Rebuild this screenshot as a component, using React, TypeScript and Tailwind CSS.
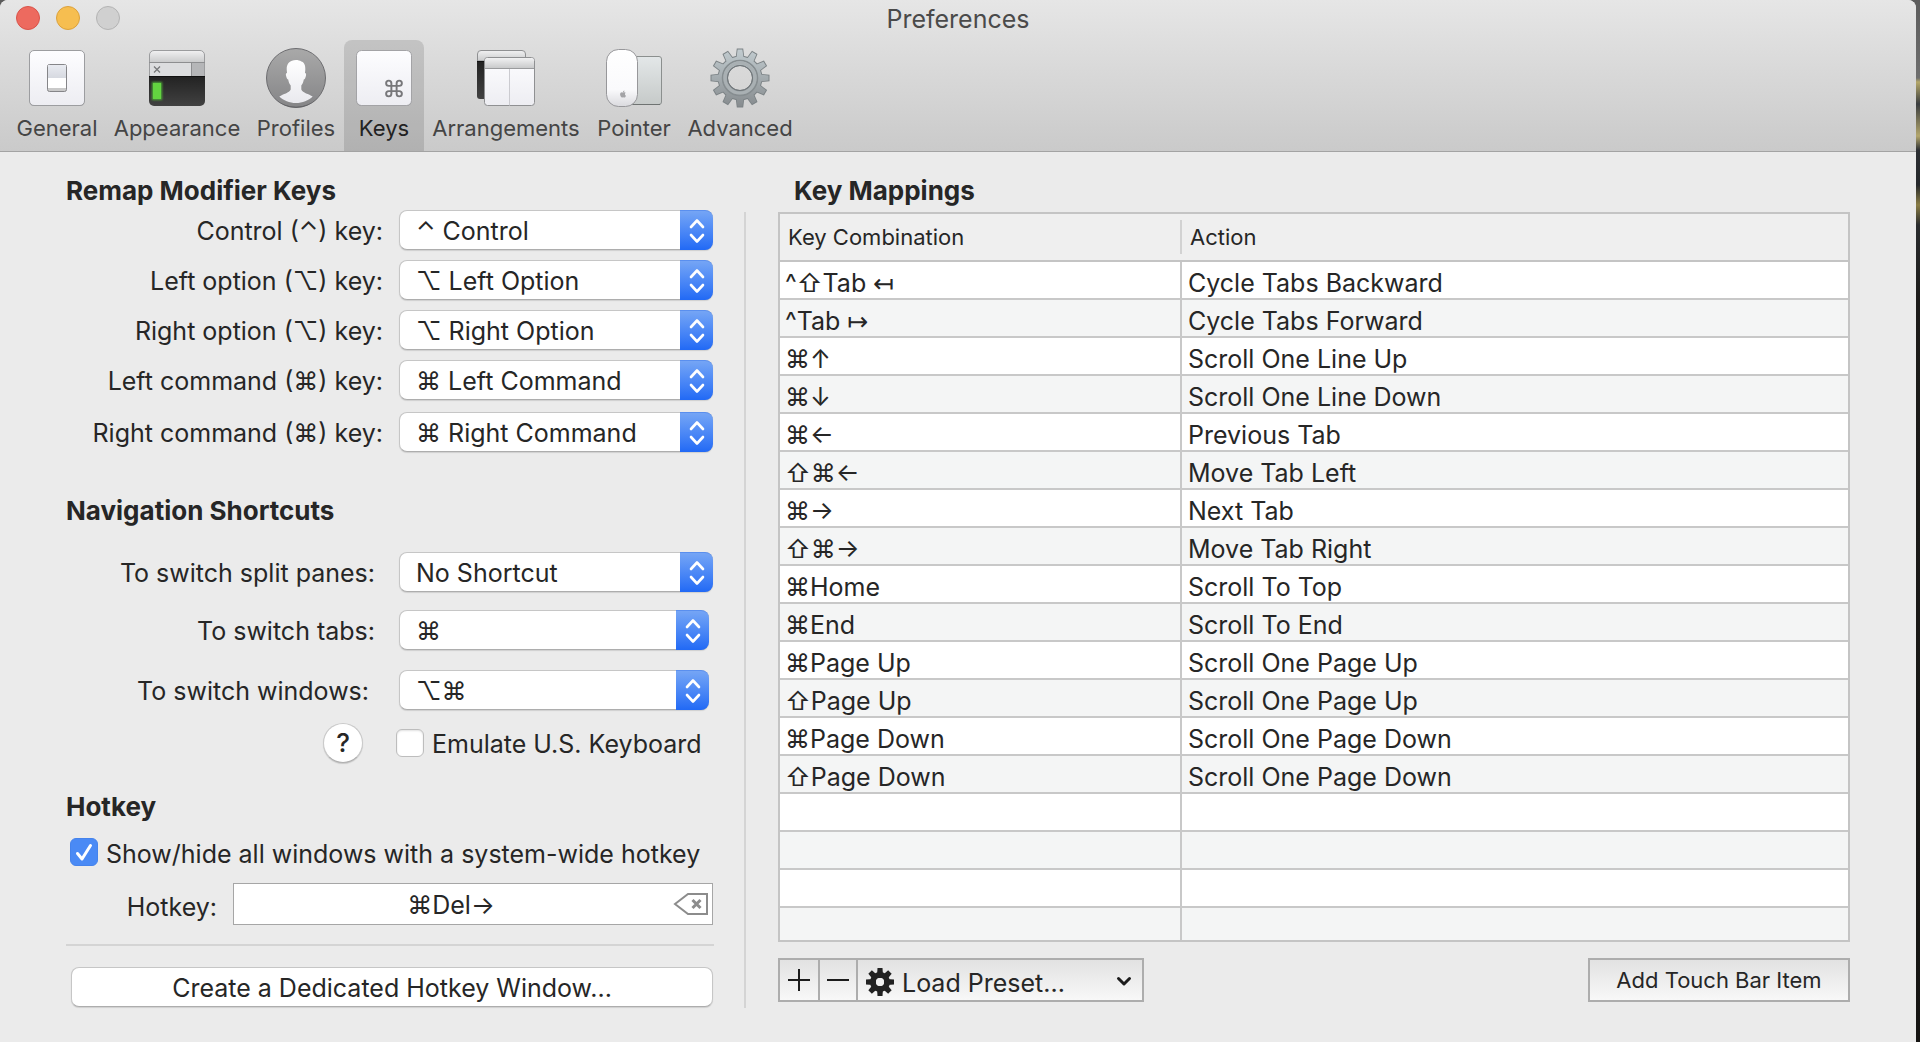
import { useState, type ReactNode } from "react";
import { Command } from "lucide-react";
import { FaApple } from "react-icons/fa";

const TWELVE_TEETH = [0, 30, 60, 90, 120, 150, 180, 210, 240, 270, 300, 330];
const EIGHT_TEETH = [0, 45, 90, 135, 180, 225, 270, 315];

function GeneralIcon() {
  return (
    <svg width="60" height="60" viewBox="0 0 60 60" aria-hidden="true">
      <defs>
        <linearGradient id="plate" x1="0" y1="0" x2="0" y2="1">
          <stop offset="0" stopColor="#fdfdff" />
          <stop offset="1" stopColor="#ededf2" />
        </linearGradient>
        <linearGradient id="rocker" x1="0" y1="0" x2="0" y2="1">
          <stop offset="0" stopColor="#e9ebf1" />
          <stop offset="1" stopColor="#d6d9e0" />
        </linearGradient>
      </defs>
      <rect x="2.5" y="3" width="55" height="55" rx="4.5" fill="#8f8f92" />
      <rect x="2.5" y="2.5" width="55" height="55" rx="4.5" fill="url(#plate)" stroke="#9c9da0" />
      <rect x="20.5" y="16.5" width="19" height="27" rx="2" fill="#c9c9c9" stroke="#858588" />
      <rect x="21" y="17" width="18" height="13" fill="url(#rocker)" />
      <rect x="21" y="30" width="18" height="10" fill="#fff" />
    </svg>
  );
}

function AppearanceIcon() {
  return (
    <svg width="60" height="60" viewBox="0 0 60 60" aria-hidden="true">
      <defs>
        <linearGradient id="bar" x1="0" y1="0" x2="0" y2="1">
          <stop offset="0" stopColor="#f1f1f2" />
          <stop offset="1" stopColor="#c9cacb" />
        </linearGradient>
        <linearGradient id="screen" x1="0" y1="0" x2="0" y2="1">
          <stop offset="0" stopColor="#222" />
          <stop offset="1" stopColor="#414141" />
        </linearGradient>
        <filter id="glow" x="-50%" y="-50%" width="200%" height="200%">
          <feGaussianBlur stdDeviation="1.2" />
        </filter>
      </defs>
      <path d="M2 28h56v25a5 5 0 0 1-5 5H7a5 5 0 0 1-5-5z" fill="url(#screen)" />
      <path d="M2.500 14.500V7a4.500 4.500 0 0 1 4.500-4.500h46a4.500 4.500 0 0 1 4.500 4.500v7.500z" fill="url(#bar)" stroke="#9b9c9e" />
      <rect x="2" y="14" width="42" height="14" fill="#dcdddf" />
      <rect x="44" y="14" width="14" height="14" fill="#b5b6b8" />
      <path d="M2 14.500h56M44.500 14v14" stroke="#8d8e90" />
      <path d="M2.500 15v13M57.500 15v13" stroke="#9b9c9e" />
      <path d="M2 28.500h56" stroke="#111" />
      <path d="M7 18.500l6 6M13 18.500l-6 6" stroke="#77787a" strokeWidth="1.300" />
      <rect x="5" y="34" width="10" height="18" fill="#4fae38" filter="url(#glow)" />
      <rect x="6" y="35" width="8" height="16" fill="#63d440" />
    </svg>
  );
}

function ProfilesIcon() {
  return (
    <svg width="60" height="60" viewBox="0 0 60 60" aria-hidden="true">
      <defs>
        <linearGradient id="disc" x1="0" y1="0" x2="0" y2="1">
          <stop offset="0" stopColor="#a9a9a9" />
          <stop offset="1" stopColor="#858587" />
        </linearGradient>
        <linearGradient id="bust" x1="0" y1="0" x2="0" y2="1">
          <stop offset="0" stopColor="#fff" />
          <stop offset="1" stopColor="#e9e9ee" />
        </linearGradient>
      </defs>
      <circle cx="30" cy="30" r="29.500" fill="url(#disc)" stroke="#6d6d70" />
      <path d="M8 50a30 30 0 0 0 44 0 32 32 0 0 1-44 0z" fill="#5f5f62" />
      <path
        d="M30 12c-6 0-9.500 3.500-9.300 9.500l.3 3.500c-1.200 0-1.300 1.500-.9 3 .4 2 1.200 3.300 2.100 3.500.4 2.600 1.300 4.500 2.500 6v4c-1.500 3.500-7.500 4.500-11.400 7C17.500 52.500 23.500 55 30 55s12.500-2.500 16.700-6.500c-3.900-2.500-9.900-3.500-11.400-7v-4c1.200-1.500 2.100-3.400 2.500-6 .9-.2 1.700-1.500 2.100-3.500.4-1.500.3-3-.9-3l.3-3.500c.2-5-1.500-7.300-4-8C34 12.500 32 12 30 12z"
        fill="url(#bust)"
      />
    </svg>
  );
}

function KeysIcon() {
  return (
    <svg width="60" height="60" viewBox="0 0 60 60" aria-hidden="true">
      <rect x="2.500" y="3" width="55" height="55" rx="5" fill="#8a8a8d" />
      <rect x="2.500" y="2.500" width="55" height="55" rx="5" fill="url(#plate)" stroke="#a3a3a6" />
      <Command x={29.500} y={30} width={21} height={21} stroke="#77777a" strokeWidth={2.200} />
    </svg>
  );
}

function ArrangementsIcon() {
  return (
    <svg width="60" height="60" viewBox="0 0 60 60" aria-hidden="true">
      <path d="M1 13h20v38H4a3 3 0 0 1-3-3z" fill="url(#screen)" />
      <path d="M1.500 13V6A3.500 3.500 0 0 1 5 2.500h41A3.500 3.500 0 0 1 49.500 6v7z" fill="url(#bar)" stroke="#8f9092" />
      <path d="M1 13.500h10" stroke="#111" />
      <rect x="8.500" y="9.500" width="50" height="48" rx="3" fill="url(#plate)" stroke="#8f9092" />
      <path d="M9 20V13a3 3 0 0 1 3-3h43a3 3 0 0 1 3 3v7z" fill="url(#bar)" />
      <path d="M9 20.500h49" stroke="#9a9b9d" />
      <path d="M33.500 21v36.500" stroke="#cbcbd0" />
    </svg>
  );
}

function PointerIcon() {
  return (
    <svg width="60" height="60" viewBox="0 0 60 60" aria-hidden="true">
      <defs>
        <linearGradient id="pad" x1="0" y1="0" x2="0" y2="1">
          <stop offset="0" stopColor="#e3e7e8" />
          <stop offset="1" stopColor="#c6cac9" />
        </linearGradient>
        <linearGradient id="mouse" x1="0" y1="0" x2="0" y2="1">
          <stop offset="0" stopColor="#fff" />
          <stop offset="0.700" stopColor="#fafafc" />
          <stop offset="1" stopColor="#dadade" />
        </linearGradient>
      </defs>
      <rect x="24.500" y="8.500" width="33" height="48" rx="2.500" fill="url(#pad)" stroke="#8b8f8e" />
      <path d="M27 56.500h29" stroke="#6f7372" />
      <rect x="2.500" y="1.500" width="31" height="57" rx="12" fill="url(#mouse)" stroke="#97979a" />
      <FaApple x={15} y={42} size={8} color="#a3a3a6" />
    </svg>
  );
}

function AdvancedIcon() {
  return (
    <svg width="60" height="60" viewBox="0 0 60 60" aria-hidden="true">
      <defs>
        <linearGradient id="steel" gradientUnits="userSpaceOnUse" x1="0" y1="0" x2="0" y2="60">
          <stop offset="0" stopColor="#c3cdd1" />
          <stop offset="1" stopColor="#858a8d" />
        </linearGradient>
        <mask id="teeth">
          {TWELVE_TEETH.map((a) => (
            <path key={a} d="M26.800 0.500h6.400l1.300 11h-9z" fill="#fff" transform={`rotate(${a} 30 30)`} />
          ))}
          <circle cx="30" cy="30" r="22.500" fill="#fff" />
          <circle cx="30" cy="30" r="12" fill="#000" />
        </mask>
        <mask id="teethInner">
          {TWELVE_TEETH.map((a) => (
            <path key={a} d="M27.600 1.500h4.800l1.300 10h-7.400z" fill="#fff" transform={`rotate(${a} 30 30)`} />
          ))}
          <circle cx="30" cy="30" r="21.500" fill="#fff" />
          <circle cx="30" cy="30" r="13" fill="#000" />
        </mask>
      </defs>
      <rect width="60" height="60" fill="#7b8285" mask="url(#teeth)" />
      <rect width="60" height="60" fill="url(#steel)" mask="url(#teethInner)" />
      <circle cx="30" cy="30" r="17.500" fill="none" stroke="#868d90" strokeWidth="1.500" />
      <circle cx="30" cy="30" r="15" fill="none" stroke="#a9b0b3" strokeWidth="3" />
      <circle cx="30" cy="30" r="12.500" fill="none" stroke="#70767a" />
    </svg>
  );
}

function SmallGear() {
  return (
    <svg width="28" height="28" viewBox="0 0 28 28" aria-hidden="true">
      <g fill="#222">
        {EIGHT_TEETH.map((a) => (
          <path key={a} d="M11.500 0h5l.5 7h-6z" transform={`rotate(${a} 14 14)`} />
        ))}
      </g>
      <circle cx="14" cy="14" r="7" fill="none" stroke="#222" strokeWidth="6" />
      <circle cx="14" cy="14" r="4" fill="#f0f0f0" />
    </svg>
  );
}

type Tab = { name: string; width: string; icon: ReactNode };

const TABS: Tab[] = [
  { name: "General", width: "w-[98px]", icon: <GeneralIcon /> },
  { name: "Appearance", width: "w-[142px]", icon: <AppearanceIcon /> },
  { name: "Profiles", width: "w-[96px]", icon: <ProfilesIcon /> },
  { name: "Keys", width: "w-[80px]", icon: <KeysIcon /> },
  { name: "Arrangements", width: "w-[164px]", icon: <ArrangementsIcon /> },
  { name: "Pointer", width: "w-[92px]", icon: <PointerIcon /> },
  { name: "Advanced", width: "w-[120px]", icon: <AdvancedIcon /> },
];

const MODIFIERS = ["⌃ Control", "⌥ Left Option", "⌥ Right Option", "⌘ Left Command", "⌘ Right Command"];

const MAPPINGS: [string, string][] = [
  ["^⇧Tab ↤", "Cycle Tabs Backward"],
  ["^Tab ↦", "Cycle Tabs Forward"],
  ["⌘↑", "Scroll One Line Up"],
  ["⌘↓", "Scroll One Line Down"],
  ["⌘←", "Previous Tab"],
  ["⇧⌘←", "Move Tab Left"],
  ["⌘→", "Next Tab"],
  ["⇧⌘→", "Move Tab Right"],
  ["⌘Home", "Scroll To Top"],
  ["⌘End", "Scroll To End"],
  ["⌘Page Up", "Scroll One Page Up"],
  ["⇧Page Up", "Scroll One Page Up"],
  ["⌘Page Down", "Scroll One Page Down"],
  ["⇧Page Down", "Scroll One Page Down"],
  ["", ""],
  ["", ""],
  ["", ""],
  ["", ""],
];

type PopupProps = { id: string; label: string; value: string; options: string[]; row: string; labelPad: string; width: string };

function PopupRow({ id, label, value, options, row, labelPad, width }: PopupProps) {
  return (
    <div className={`flex items-center ${row}`}>
      <label htmlFor={id} className={`w-[333px] shrink-0 pt-[2px] text-right whitespace-nowrap ${labelPad}`}>
        {label}
      </label>
      <div className={`relative ${width}`}>
        <select
          id={id}
          defaultValue={value}
          className="block h-10 w-full appearance-none rounded-lg border border-[#c6c6c6] border-b-[#adadad] bg-white pt-[2px] pr-9 pl-4 shadow-[0_1px_1px_rgba(0,0,0,0.12)]"
        >
          {options.map((o) => (
            <option key={o}>{o}</option>
          ))}
        </select>
        <span className="pointer-events-none absolute inset-y-0 right-0 flex w-[33px] items-center justify-center rounded-r-lg border-t border-[#5a8fee] bg-linear-to-b from-[#75a5f5] to-[#2169f5]">
          <svg width="18" height="26" viewBox="0 0 18 26" fill="none" stroke="#fff" strokeWidth="2.600" strokeLinecap="round" strokeLinejoin="round" aria-hidden="true">
            <path d="M3 9l6-6.500L15 9M3 17l6 6.500 6-6.500" />
          </svg>
        </span>
      </div>
    </div>
  );
}

function LeftColumn() {
  const [emulate, setEmulate] = useState(false);
  const [hotkeyOn, setHotkeyOn] = useState(true);
  const [hotkey, setHotkey] = useState("⌘Del→");
  return (
    <div className="w-[648px] shrink-0">
      <section>
        <h2 className="text-[26px] leading-8 font-bold">Remap Modifier Keys</h2>
        <div className="flex flex-col gap-[10px] pt-[3px]">
          <PopupRow id="control" label="Control (⌃) key:" value={MODIFIERS[0]} options={MODIFIERS} row="" labelPad="pr-4" width="w-[314px]" />
          <PopupRow id="left-option" label="Left option (⌥) key:" value={MODIFIERS[1]} options={MODIFIERS} row="" labelPad="pr-4" width="w-[314px]" />
          <PopupRow id="right-option" label="Right option (⌥) key:" value={MODIFIERS[2]} options={MODIFIERS} row="" labelPad="pr-4" width="w-[314px]" />
          <PopupRow id="left-command" label="Left command (⌘) key:" value={MODIFIERS[3]} options={MODIFIERS} row="" labelPad="pr-4" width="w-[314px]" />
          <PopupRow id="right-command" label="Right command (⌘) key:" value={MODIFIERS[4]} options={MODIFIERS} row="pt-[2px]" labelPad="pr-4" width="w-[314px]" />
        </div>
      </section>

      <section className="pt-[43px]">
        <h2 className="text-[26px] leading-8 font-bold">Navigation Shortcuts</h2>
        <div className="flex flex-col gap-[18px] pt-[25px]">
          <PopupRow id="panes" label="To switch split panes:" value="No Shortcut" options={["No Shortcut", "⌘", "⌥⌘"]} row="" labelPad="pr-6" width="w-[314px]" />
          <PopupRow id="tabs" label="To switch tabs:" value="⌘" options={["No Shortcut", "⌘", "⌥⌘"]} row="" labelPad="pr-6" width="w-[310px]" />
          <PopupRow id="windows" label="To switch windows:" value="⌥⌘" options={["No Shortcut", "⌘", "⌥⌘"]} row="pt-[2px]" labelPad="pr-[30px]" width="w-[310px]" />
        </div>
        <div className="flex items-center pt-[13px] pl-[257px]">
          <button
            type="button"
            aria-label="Help"
            className="flex size-10 items-center justify-center rounded-full border border-[#c9c9c9] border-b-[#b0b0b0] bg-white text-[26px] leading-8 font-medium shadow-[0_1px_1px_rgba(0,0,0,0.15)]"
          >
            ?
          </button>
          <label className="flex items-center gap-2 pl-[33px] whitespace-nowrap">
            <input
              type="checkbox"
              checked={emulate}
              onChange={(e) => setEmulate(e.target.checked)}
              className="size-7 appearance-none rounded-md border border-[#bdbdbd] bg-white shadow-[inset_0_1px_2px_rgba(0,0,0,0.12)] checked:bg-[#4a8af5]"
            />
            <span className="pt-[2px]">Emulate U.S. Keyboard</span>
          </label>
        </div>
      </section>

      <section className="pt-7">
        <h2 className="text-[26px] leading-8 font-bold">Hotkey</h2>
        <label className="flex items-center gap-2 pt-[11px] pl-1 whitespace-nowrap">
          <span className="relative flex size-7 shrink-0">
            <input
              type="checkbox"
              checked={hotkeyOn}
              onChange={(e) => setHotkeyOn(e.target.checked)}
              className="size-7 appearance-none rounded-md border border-[#bdbdbd] bg-white checked:border-[#4583ec] checked:bg-[#4a8af5]"
            />
            {hotkeyOn && (
              <svg className="pointer-events-none absolute inset-0" width="28" height="28" viewBox="0 0 28 28" fill="none" stroke="#fff" strokeWidth="3" strokeLinecap="round" strokeLinejoin="round" aria-hidden="true">
                <path d="M7.500 15.500l4.500 5.500 8.500-13.500" />
              </svg>
            )}
          </span>
          <span className="pt-1">Show/hide all windows with a system-wide hotkey</span>
        </label>
        <div className="flex items-center pt-[13px] pr-px">
          <label htmlFor="hotkey" className="w-[167px] shrink-0 pt-1.5 pr-4 text-right">
            Hotkey:
          </label>
          <div className="relative flex-1">
            <input
              id="hotkey"
              value={hotkey}
              onChange={(e) => setHotkey(e.target.value)}
              className="block h-[42px] w-full border border-[#a6a6a6] bg-white pt-[2px] pr-11 text-center"
            />
            <button type="button" aria-label="Clear hotkey" onClick={() => setHotkey("")} className="absolute inset-y-0 right-1 flex items-center">
              <svg width="36" height="24" viewBox="0 0 36 24" fill="none" stroke="#8c8c8c" strokeWidth="2" aria-hidden="true">
                <path d="M2 12L15 2h19v20H15z" />
                <path d="M19.500 8l8 8M27.500 8l-8 8" strokeWidth="3" />
              </svg>
            </button>
          </div>
        </div>
        <hr className="mt-[19px] border-0 border-t-2 border-[#d4d4d4]" />
        <div className="pt-[21px] pr-px pl-[5px]">
          <button
            type="button"
            className="h-10 w-full rounded-lg border border-[#c6c6c6] border-b-[#adadad] bg-white pt-[2px] shadow-[0_1px_1px_rgba(0,0,0,0.12)]"
          >
            Create a Dedicated Hotkey Window...
          </button>
        </div>
      </section>
    </div>
  );
}

function RightColumn() {
  return (
    <div className="min-w-0 flex-1">
      <h2 className="pl-4 text-[26px] leading-8 font-bold">Key Mappings</h2>
      <div className="mt-[5px] border-2 border-[#c4c4c4]">
        <table className="w-full table-fixed border-separate border-spacing-0 text-left">
          <colgroup>
            <col className="w-[402px]" />
            <col />
          </colgroup>
          <thead className="bg-[#efefef] text-[22px]">
            <tr className="h-12">
              <th className="border-b-2 border-[#c4c4c4] p-0 font-normal">
                <div className="flex h-[34px] items-center border-r-2 border-[#d2d2d2] pl-2 leading-7">Key Combination</div>
              </th>
              <th className="border-b-2 border-[#c4c4c4] p-0 pl-2 leading-7 font-normal">Action</th>
            </tr>
          </thead>
          <tbody>
            {MAPPINGS.map(([keys, action], i) => (
              <tr key={i} className="h-[38px] bg-white align-top leading-7 whitespace-nowrap last:h-8 even:bg-[#f4f5f5] [&:last-child>td]:border-b-0">
                <td className="border-r-2 border-b-2 border-[#c8c8c8] p-0 pt-[7px] pl-[5px]">{keys}</td>
                <td className="border-b-2 border-[#c8c8c8] p-0 pt-[7px] pl-1.5">{action}</td>
              </tr>
            ))}
          </tbody>
        </table>
      </div>
      <div className="flex items-center justify-between pt-4">
        <div className="flex h-11 divide-x-2 divide-[#adadad] border-2 border-[#adadad] bg-linear-to-b from-[#e2e2e2] to-[#f8f8f8]">
          <button type="button" aria-label="Add mapping" className="flex w-10 items-center justify-center">
            <svg width="22" height="22" viewBox="0 0 22 22" stroke="#1c1c1c" strokeWidth="2" aria-hidden="true">
              <path d="M0 11h22M11 0v22" />
            </svg>
          </button>
          <button type="button" aria-label="Remove mapping" className="flex w-[38px] items-center justify-center">
            <svg width="22" height="22" viewBox="0 0 22 22" stroke="#1c1c1c" strokeWidth="2" aria-hidden="true">
              <path d="M0 11h22" />
            </svg>
          </button>
          <div className="relative flex w-[284px] items-center">
            <span className="pointer-events-none absolute left-2 top-2">
              <SmallGear />
            </span>
            <select aria-label="Load preset" className="h-full w-full appearance-none bg-transparent pt-1.5 pl-11">
              <option>Load Preset...</option>
            </select>
            <svg className="pointer-events-none absolute right-2.5 top-4" width="16" height="12" viewBox="0 0 16 12" fill="none" stroke="#1c1c1c" strokeWidth="3" strokeLinecap="round" strokeLinejoin="round" aria-hidden="true">
              <path d="M2.500 2.500L8 8l5.500-5.500" />
            </svg>
          </div>
        </div>
        <button type="button" className="h-11 w-[262px] border-2 border-[#adadad] bg-linear-to-b from-[#e2e2e2] to-[#f8f8f8] text-[22px]">
          Add Touch Bar Item
        </button>
      </div>
    </div>
  );
}

export default function App() {
  const [active, setActive] = useState("Keys");
  return (
    <div className="flex min-h-screen bg-[linear-gradient(#5c5c5c_0,#6e6e6e_78px,#b5a86a_82px,#3a3d40_104px,#b3a66c_136px,#2c2f33_150px,#25282b_185px,#8a7d45_205px,#2a2c2e_225px,#1d1c1a_300px,#161513_100%)] pr-1 font-[Inter,'DejaVu_Sans',sans-serif] text-[25px] leading-8 text-[#262626]">
      <main className="flex min-w-0 flex-1 flex-col overflow-hidden rounded-t-lg bg-[#ebebeb]">
        <header className="border-b border-[#a3a3a3] bg-linear-to-b from-[#e6e6e6] to-[#cacaca]">
          <div className="mb-1 grid h-9 grid-cols-[1fr_auto_1fr] items-center">
            <div className="flex gap-4 pl-4">
              <button type="button" aria-label="Close" className="size-6 rounded-full border border-[#d9534a] bg-[#ed6a5f]" />
              <button type="button" aria-label="Minimize" className="size-6 rounded-full border border-[#dba13c] bg-[#f6be50]" />
              <button type="button" aria-label="Zoom" disabled className="size-6 rounded-full border border-[#b3b3b3] bg-[#d0d0d0]" />
            </div>
            <h1 className="pt-[2px] text-[25px] leading-8 text-[#4a4a4a]">Preferences</h1>
          </div>
          <nav className="flex pl-2" aria-label="Preference panes">
            {TABS.map((t) => (
              <button
                key={t.name}
                type="button"
                aria-pressed={active === t.name}
                onClick={() => setActive(t.name)}
                className={`flex h-[111px] flex-col items-center gap-1.5 rounded-t-lg pt-2 text-[22px] leading-7 text-[#454545] aria-pressed:bg-black/12 aria-pressed:text-[#222] ${t.width}`}
              >
                {t.icon}
                {t.name}
              </button>
            ))}
          </nav>
        </header>
        <div className="flex flex-1 pt-[23px] pr-[66px] pb-[34px] pl-[66px]">
          <LeftColumn />
          <div className="mr-8 ml-[30px] mt-[37px] w-[2px] shrink-0 self-stretch bg-[#d4d4d4]" />
          <RightColumn />
        </div>
      </main>
    </div>
  );
}
